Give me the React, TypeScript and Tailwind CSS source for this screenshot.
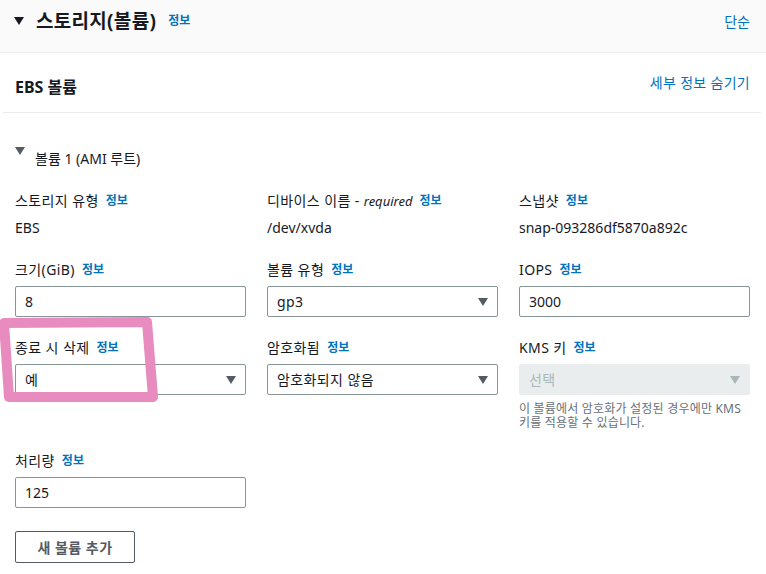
import { ReactNode } from "react";

const font = { fontFamily: '"Noto Sans", "Noto Sans CJK KR", sans-serif' };

function Info() {
  return <span className="ml-[7px] text-[12px] font-bold text-[#0073bb] tracking-normal">정보</span>;
}

function Label({ children }: { children: ReactNode }) {
  return (
    <div className="h-5 leading-5 text-[14px] tracking-[0.4px] text-[#16191f] flex items-center whitespace-nowrap">
      {children}
      <Info />
    </div>
  );
}

function Arrow({ disabled }: { disabled?: boolean }) {
  return (
    <svg width="10" height="8" viewBox="0 0 10 8">
      <path d="M0 0 H10 L5 8 Z" fill={disabled ? "#aab7b8" : "#545b64"} />
    </svg>
  );
}

function Input({ value }: { value: string }) {
  return (
    <div className="mt-[6px] h-[31px] border border-[#879596] rounded-[2px] bg-white px-[9px] flex items-center text-[14px] text-[#16191f]">
      {value}
    </div>
  );
}

function Select({ value, disabled }: { value: string; disabled?: boolean }) {
  return (
    <div
      className={`mt-[6px] h-[31px] border rounded-[2px] pl-[9px] pr-[9px] flex items-center justify-between text-[14px] tracking-[0.4px] ${
        disabled ? "bg-[#eaeded] border-[#eaeded] text-[#aab7b8]" : "bg-white border-[#879596] text-[#16191f]"
      }`}
    >
      <span>{value}</span>
      <Arrow disabled={disabled} />
    </div>
  );
}

export default function App() {
  return (
    <div className="relative w-[766px] h-[574px] bg-white overflow-hidden" style={font}>
      {/* header */}
      <div className="h-[53px] pb-[10px] bg-[#fafafa] border-b border-[#eaeded] flex items-center justify-between pl-[14px] pr-[16px]">
        <div className="flex items-center">
          <svg width="10" height="8" viewBox="0 0 10 8">
            <path d="M0 0 H10 L5 8 Z" fill="#16191f" />
          </svg>
          <span className="ml-[12px] text-[19px] tracking-[0.3px] font-bold text-[#16191f]">스토리지(볼륨)</span>
          <span className="ml-[12px] text-[12px] font-bold text-[#0073bb]">정보</span>
        </div>
        <span className="text-[14px] text-[#0073bb]">단순</span>
      </div>

      {/* EBS header */}
      <div className="ml-[3px] mr-[5px] h-[60px] border-b border-[#eaeded] flex items-center justify-between pl-[12px] pr-[11px]">
        <span className="mt-[8px] text-[16px] font-bold text-[#16191f]">EBS 볼륨</span>
        <span className="text-[14px] tracking-[0.3px] text-[#0073bb]">세부 정보 숨기기</span>
      </div>

      <div className="pl-[15px] pr-[16px]">
        <div className="mt-[35px] h-5 flex items-center">
          <svg width="10" height="8" viewBox="0 0 10 8" className="-mt-[14px]">
            <path d="M0 0 H10 L5 8 Z" fill="#545b64" />
          </svg>
          <span className="ml-[10px] text-[14px] text-[#16191f]">볼륨 1 (AMI 루트)</span>
        </div>

        <div className="mt-[23px] grid grid-cols-3 gap-x-[21px]">
          <div>
            <Label>스토리지 유형</Label>
            <div className="mt-[7px] h-5 leading-5 text-[14px] text-[#16191f]">EBS</div>
          </div>
          <div>
            <Label>
              디바이스 이름 -&nbsp;<i className="text-[13px] tracking-normal">required</i>
            </Label>
            <div className="mt-[7px] h-5 leading-5 text-[14px] text-[#16191f]">/dev/xvda</div>
          </div>
          <div>
            <Label>스냅샷</Label>
            <div className="mt-[7px] h-5 leading-5 text-[14px] text-[#16191f]">snap-093286df5870a892c</div>
          </div>
        </div>

        <div className="mt-[22px] grid grid-cols-3 gap-x-[21px]">
          <div>
            <Label>크기(GiB)</Label>
            <Input value="8" />
          </div>
          <div>
            <Label>볼륨 유형</Label>
            <Select value="gp3" />
          </div>
          <div>
            <Label>IOPS</Label>
            <Input value="3000" />
          </div>
        </div>

        <div className="mt-[21px] grid grid-cols-3 gap-x-[21px]">
          <div>
            <Label>종료 시 삭제</Label>
            <Select value="예" />
          </div>
          <div>
            <Label>암호화됨</Label>
            <Select value="암호화되지 않음" />
          </div>
          <div>
            <Label>KMS 키</Label>
            <Select value="선택" disabled />
            <p className="mt-[7px] text-[12px] leading-[14px] tracking-[0.2px] text-[#687078]">
              이 볼륨에서 암호화가 설정된 경우에만 KMS 키를 적용할 수 있습니다.
            </p>
          </div>
        </div>

        <div className="mt-[21px] grid grid-cols-3 gap-x-[21px]">
          <div>
            <Label>처리량</Label>
            <Input value="125" />
          </div>
        </div>

        <button className="mt-[23px] w-[120px] h-[32px] border border-[#545b64] rounded-[2px] text-[14px] tracking-[0.5px] font-bold text-[#545b64] bg-white">
          새 볼륨 추가
        </button>
      </div>

      {/* hand-drawn highlight */}
      <svg className="absolute left-0 top-0 pointer-events-none" width="766" height="574">
        <path
          d="M4 323 L147 322 L153 397 L9 397 Z"
          fill="none"
          stroke="#e88bbf"
          strokeWidth="10"
          strokeLinejoin="round"
        />
      </svg>
    </div>
  );
}
